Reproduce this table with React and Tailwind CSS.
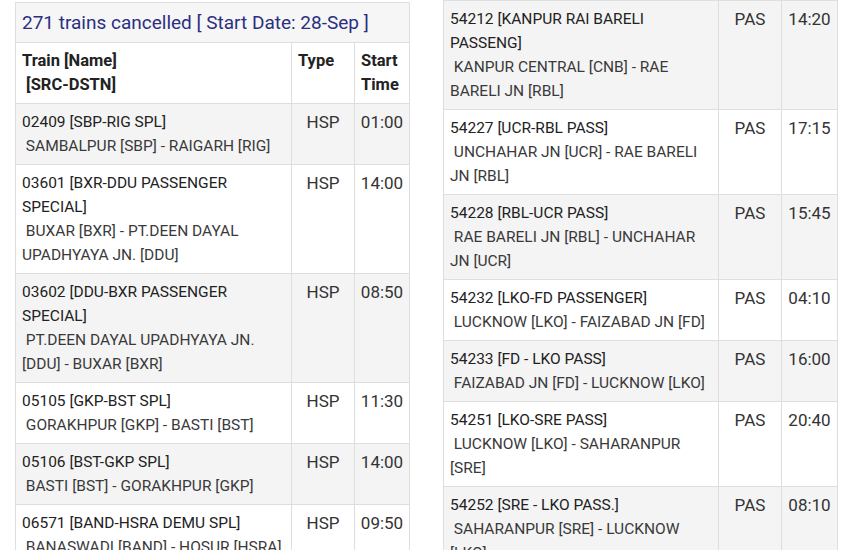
const left = [
  { lines: ["02409 [SBP-RIG SPL]"], sub: ["\u00a0SAMBALPUR [SBP] - RAIGARH [RIG]"], type: "HSP", time: "01:00" },
  { lines: ["03601 [BXR-DDU PASSENGER", "SPECIAL]"], sub: ["\u00a0BUXAR [BXR] - PT.DEEN DAYAL", "UPADHYAYA JN. [DDU]"], type: "HSP", time: "14:00" },
  { lines: ["03602 [DDU-BXR PASSENGER", "SPECIAL]"], sub: ["\u00a0PT.DEEN DAYAL UPADHYAYA JN.", "[DDU] - BUXAR [BXR]"], type: "HSP", time: "08:50" },
  { lines: ["05105 [GKP-BST SPL]"], sub: ["\u00a0GORAKHPUR [GKP] - BASTI [BST]"], type: "HSP", time: "11:30" },
  { lines: ["05106 [BST-GKP SPL]"], sub: ["\u00a0BASTI [BST] - GORAKHPUR [GKP]"], type: "HSP", time: "14:00" },
  { lines: ["06571 [BAND-HSRA DEMU SPL]"], sub: ["\u00a0BANASWADI [BAND] - HOSUR [HSRA]"], type: "HSP", time: "09:50" },
]

const right = [
  { lines: ["54212 [KANPUR RAI BARELI", "PASSENG]"], sub: ["\u00a0KANPUR CENTRAL [CNB] - RAE", "BARELI JN [RBL]"], type: "PAS", time: "14:20" },
  { lines: ["54227 [UCR-RBL PASS]"], sub: ["\u00a0UNCHAHAR JN [UCR] - RAE BARELI", "JN [RBL]"], type: "PAS", time: "17:15" },
  { lines: ["54228 [RBL-UCR PASS]"], sub: ["\u00a0RAE BARELI JN [RBL] - UNCHAHAR", "JN [UCR]"], type: "PAS", time: "15:45" },
  { lines: ["54232 [LKO-FD PASSENGER]"], sub: ["\u00a0LUCKNOW [LKO] - FAIZABAD JN [FD]"], type: "PAS", time: "04:10" },
  { lines: ["54233 [FD - LKO PASS]"], sub: ["\u00a0FAIZABAD JN [FD] - LUCKNOW [LKO]"], type: "PAS", time: "16:00" },
  { lines: ["54251 [LKO-SRE PASS]"], sub: ["\u00a0LUCKNOW [LKO] - SAHARANPUR", "[SRE]"], type: "PAS", time: "20:40" },
  { lines: ["54252 [SRE - LKO PASS.]"], sub: ["\u00a0SAHARANPUR [SRE] - LUCKNOW", "[LKO]"], type: "PAS", time: "08:10" },
]

function Row({ r, gray }) {
  return (
    <tr className={gray ? "bg-[#f4f4f4]" : "bg-white"}>
      <td className="border border-[#dedede] px-[6px] py-[6px] align-top text-[15.5px]">
        {r.lines.map((l, i) => (
          <div key={i} className="whitespace-nowrap text-[#222]">{l}</div>
        ))}
        {r.sub.map((l, i) => (
          <div key={"s" + i} className="whitespace-nowrap text-[#3a3a3a]">{l}</div>
        ))}
      </td>
      <td className="border border-[#dedede] py-[6px] text-center align-top text-[17px] text-[#333]">{r.type}</td>
      <td className="border border-[#dedede] py-[6px] text-center align-top text-[17px] text-[#333]">{r.time}</td>
    </tr>
  )
}

function Cols() {
  return (
    <colgroup>
      <col className="w-[276px]" />
      <col className="w-[63px]" />
      <col className="w-[55px]" />
    </colgroup>
  )
}

export default function App() {
  return (
    <main className="h-[550px] w-[850px] overflow-hidden bg-white font-['Roboto',sans-serif] text-[15px] leading-[24px]">
      <div className="flex items-start">
        {/* colonne gauche */}
        <div className="ml-[15px] mt-[2px] w-[395px] shrink-0">
          <table className="w-[395px] table-fixed border-collapse">
            <Cols />
            <tbody>
              <tr>
                <td colSpan={3} className="border border-[#dedede] bg-[#f6f6f6] px-[6px] py-[5px] text-[19px] leading-[29px] text-[#2b2f80] whitespace-nowrap">
                  271 trains cancelled [ Start Date: 28-Sep ]
                </td>
              </tr>
              <tr className="bg-white font-bold text-[16.5px] text-[#222]">
                <td className="border border-[#dedede] px-[6px] py-[6px] align-top">
                  <div>Train [Name]</div>
                  <div>&nbsp;[SRC-DSTN]</div>
                </td>
                <td className="border border-[#dedede] px-[6px] py-[6px] align-top">Type</td>
                <td className="border border-[#dedede] px-[6px] py-[6px] align-top">Start Time</td>
              </tr>
              {left.map((r, i) => <Row key={i} r={r} gray={i % 2 === 0} />)}
            </tbody>
          </table>
        </div>

        {/* colonne droite */}
        <div className="ml-[33px] w-[394px] shrink-0">
          <table className="w-[394px] table-fixed border-collapse">
            <colgroup>
              <col className="w-[275px]" />
              <col className="w-[63px]" />
              <col className="w-[56px]" />
            </colgroup>
            <tbody>
              {right.map((r, i) => <Row key={i} r={r} gray={i % 2 === 0} />)}
            </tbody>
          </table>
        </div>
      </div>
    </main>
  )
}
